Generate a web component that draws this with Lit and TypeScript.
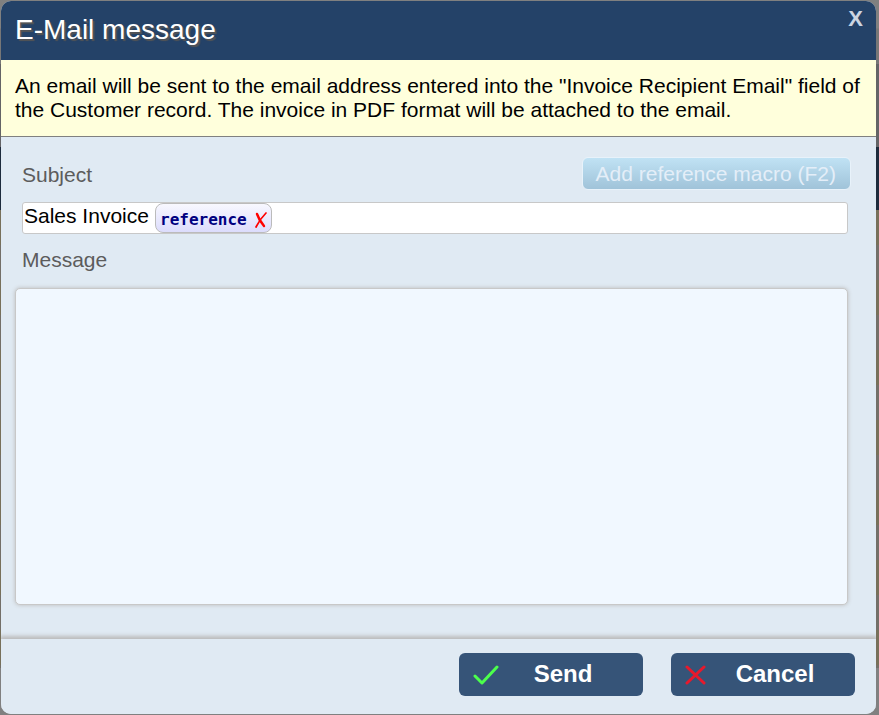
import { LitElement, html, css, svg } from "lit";
import { customElement, property, state } from "lit/decorators.js";

const checkIcon = svg`<path d="M2 11 L9 18 L24 2" stroke="#4cff4c" />`;
const crossIcon = svg`<path d="M2 2 L19 18 M19 2 L2 18" stroke="#e8192c" />`;

@customElement("dialog-button")
class DialogButton extends LitElement {
  static styles = css`
    :host {
      display: block;
    }
    .button {
      display: flex;
      align-items: center;
      width: 184px;
      height: 43px;
      padding: 0 14px;
      border: 0;
      border-radius: 6px;
      background: #365478;
      color: #fff;
      font: bold 24px/28px "Liberation Sans", Arial, sans-serif;
      cursor: pointer;
    }
    .icon {
      flex: none;
      width: 26px;
      height: 20px;
      fill: none;
      stroke-width: 3;
      stroke-linecap: round;
      stroke-linejoin: round;
    }
    .label {
      flex: 1;
      padding: 0 26px 2px 24px;
      text-align: center;
      white-space: nowrap;
    }
  `;

  @property() icon = "check";

  render() {
    return html`<button class="button" type="button">
      <svg class="icon" viewBox="0 0 26 20" aria-hidden="true">
        ${this.icon === "check" ? checkIcon : crossIcon}
      </svg>
      <span class="label"><slot></slot></span>
    </button>`;
  }
}

@customElement("app-root")
class AppRoot extends LitElement {
  static styles = css`
    :host {
      display: block;
      min-height: 100vh;
      box-sizing: border-box;
      padding: 1px 3px 1px 1px;
      /* dimmed page behind the dialog: toolbar, table head, striped rows */
      background:
        linear-gradient(#808080 0, #808080 28px, #777 29px, #777 64px, #646466 64px, #646466 147px, #1d2b3c 147px, #1d2b3c 210px, transparent 210px, transparent 668px, #808080 668px),
        repeating-linear-gradient(#77705a 0, #77705a 35px, #736f68 35px, #736f68 70px);
      font: 21px/24px "Liberation Sans", Arial, sans-serif;
      color: #000;
    }
    * {
      box-sizing: border-box;
    }
    .dialog {
      display: flex;
      flex-direction: column;
      min-height: calc(100vh - 2px);
      border-radius: 10px;
      overflow: hidden;
      background: #e0eaf3;
    }
    .header {
      display: flex;
      align-items: flex-start;
      justify-content: space-between;
      height: 59px;
      padding: 0 11px 0 14px;
      background: #244268;
    }
    .title {
      margin: 0;
      font-size: 28px;
      font-weight: normal;
      line-height: 58px;
      color: #fff;
      text-shadow: 2px 2px 1px #555;
    }
    .close {
      padding: 6px 2px;
      border: 0;
      background: none;
      color: #ccd5e2;
      font: bold 22px/24px "Liberation Sans", Arial, sans-serif;
      cursor: pointer;
    }
    .notice {
      margin: 0;
      padding: 14px;
      border-bottom: 1px solid #808080;
      background: #ffffdc;
    }
    .form {
      flex: 1;
      display: flex;
      flex-direction: column;
      padding: 20px 28px 34px 14px;
    }
    .row {
      display: flex;
      align-items: center;
      justify-content: space-between;
      height: 33px;
      margin-right: -3px;
    }
    .label {
      padding: 2px 0 0 7px;
      color: #5c5c5c;
    }
    .macro {
      height: 33px;
      padding: 0 14px 0 13px;
      border: 1px solid #e8f2fa;
      border-radius: 6px;
      background: linear-gradient(#c0e2f4, #a0c3d9);
      color: #e4eef8;
      font: 21px/24px "Liberation Sans", Arial, sans-serif;
    }
    .subject {
      display: flex;
      height: 32px;
      margin: 12px 0 12px 7px;
      border: 1px solid #c8c8c8;
      border-radius: 3px;
      background: #fff;
    }
    .text {
      width: 132px;
      height: 26px;
      padding: 0 1px;
      border: 0;
      outline: 0;
      background: none;
      color: #000;
      font: 21px/24px "Liberation Sans", Arial, sans-serif;
    }
    .rest {
      flex: 1;
      min-width: 0;
    }
    .chip {
      display: flex;
      align-items: center;
      gap: 7px;
      height: 30px;
      padding: 4px 4px 0;
      border: 1px solid #bbb;
      border-radius: 8px;
      background: linear-gradient(#f8f8ff, #dcdcfc);
      color: #000080;
      font: bold 16px/20px "DejaVu Sans Mono", monospace;
    }
    .remove {
      display: flex;
      padding: 0;
      border: 0;
      background: none;
      cursor: pointer;
    }
    .cross {
      width: 13px;
      height: 18px;
      fill: none;
      stroke: #f00;
      stroke-linecap: round;
    }
    .message {
      flex: 1;
      width: 100%;
      min-height: 120px;
      margin-top: 16px;
      padding: 8px;
      border: 1px solid #c8c8c8;
      border-radius: 5px;
      outline: 0;
      resize: none;
      background: #f1f8ff;
      box-shadow: 0 0 4px #bbb;
      font: 21px/24px "Liberation Sans", Arial, sans-serif;
    }
    .footer {
      display: flex;
      justify-content: flex-end;
      gap: 28px;
      padding: 14px 21px 18px;
      box-shadow: 0 -2px 4px 1px #bbb;
      background: #e0eaf3;
    }
  `;

  @state() private hasMacro = true;

  render() {
    return html`<div class="dialog" role="dialog" aria-labelledby="title">
      <header class="header">
        <h1 class="title" id="title">E-Mail message</h1>
        <button class="close" type="button">X</button>
      </header>
      <p class="notice">
        An email will be sent to the email address entered into the "Invoice
        Recipient Email" field of the Customer record. The invoice in PDF
        format will be attached to the email.
      </p>
      <main class="form">
        <div class="row">
          <label class="label" id="subject-label" for="subject">Subject</label>
          <button class="macro" type="button" disabled>Add reference macro (F2)</button>
        </div>
        <div class="subject">
          <input class="text" id="subject" type="text" value="Sales Invoice" />
          ${this.hasMacro
            ? html`<span class="chip">reference<button
                  class="remove"
                  type="button"
                  aria-label="Remove"
                  @click=${() => (this.hasMacro = false)}
                ><svg class="cross" viewBox="0 0 13 18" aria-hidden="true">
                  <path d="M3 3 Q5 9 10 15" stroke-width="2.4" />
                  <path d="M12 2 Q6 8 2 16" stroke-width="1.7" />
                </svg></button></span>`
            : ""}
          <input class="text rest" type="text" aria-labelledby="subject-label" />
        </div>
        <label class="label" for="message">Message</label>
        <textarea class="message" id="message"></textarea>
      </main>
      <footer class="footer">
        <dialog-button icon="check">Send</dialog-button>
        <dialog-button icon="cross">Cancel</dialog-button>
      </footer>
    </div>`;
  }
}
